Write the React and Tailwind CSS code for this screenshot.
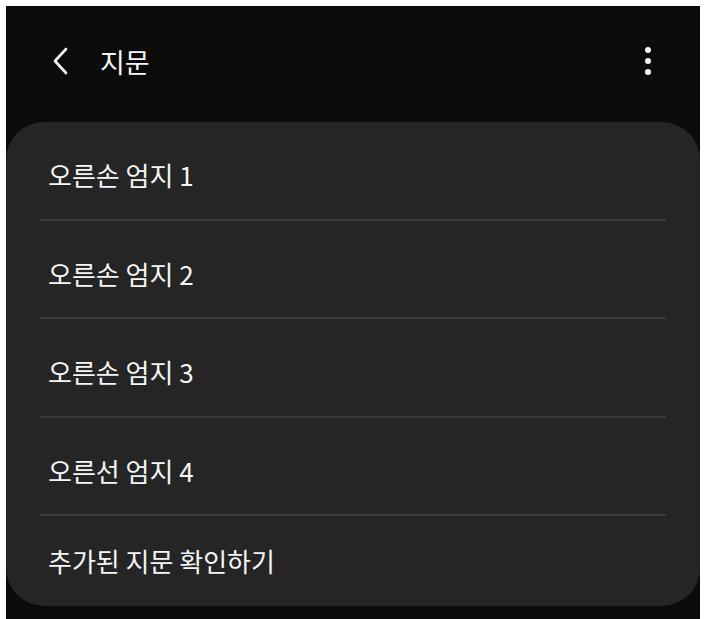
import React from 'react'

const items = ['오른손 엄지 1', '오른손 엄지 2', '오른손 엄지 3', '오른선 엄지 4']

const BackIcon = () => (
  <svg width="16" height="28" viewBox="0 0 16 28" fill="none">
    <polyline points="14,2 3,14 14,26" stroke="#f2f2f2" strokeWidth="2.6" strokeLinecap="round" strokeLinejoin="round" />
  </svg>
)

const MoreIcon = () => (
  <div className="flex flex-col gap-[5px]">
    <span className="block w-[6px] h-[6px] rounded-full bg-[#f5f5f5]" />
    <span className="block w-[6px] h-[6px] rounded-full bg-[#f5f5f5]" />
    <span className="block w-[6px] h-[6px] rounded-full bg-[#f5f5f5]" />
  </div>
)

export default function App() {
  return (
    <div
      className="bg-white w-[706px] h-[619px] pt-[6px] pl-[6px] pr-[6px]"
      style={{ fontFamily: '"Noto Sans CJK KR", "Noto Sans", sans-serif' }}
    >
      <div className="bg-[#0b0b0b] h-full flex flex-col">
        <div className="h-[116px] flex items-center pl-[46px] pr-[49px] pb-[6px]">
          <BackIcon />
          <h1 className="ml-[32px] text-[27px] text-[#f5f5f5] leading-none">지문</h1>
          <div className="ml-auto">
            <MoreIcon />
          </div>
        </div>
        <div className="bg-[#252525] rounded-[38px] h-[484px] flex flex-col">
          {items.map((label) => (
            <div key={label} className="h-[98.5px] shrink-0 flex flex-col">
              <div className="flex-1 flex items-center pl-[42px] pt-[10px] text-[26px] text-[#f5f5f5] leading-none">
                {label}
              </div>
              <div className="mx-[34px] h-[2px] bg-[#3b3b3b]" />
            </div>
          ))}
          <div className="flex-1 flex items-center pl-[42px] text-[26px] text-[#f5f5f5] leading-none">
            추가된 지문 확인하기
          </div>
        </div>
      </div>
    </div>
  )
}
